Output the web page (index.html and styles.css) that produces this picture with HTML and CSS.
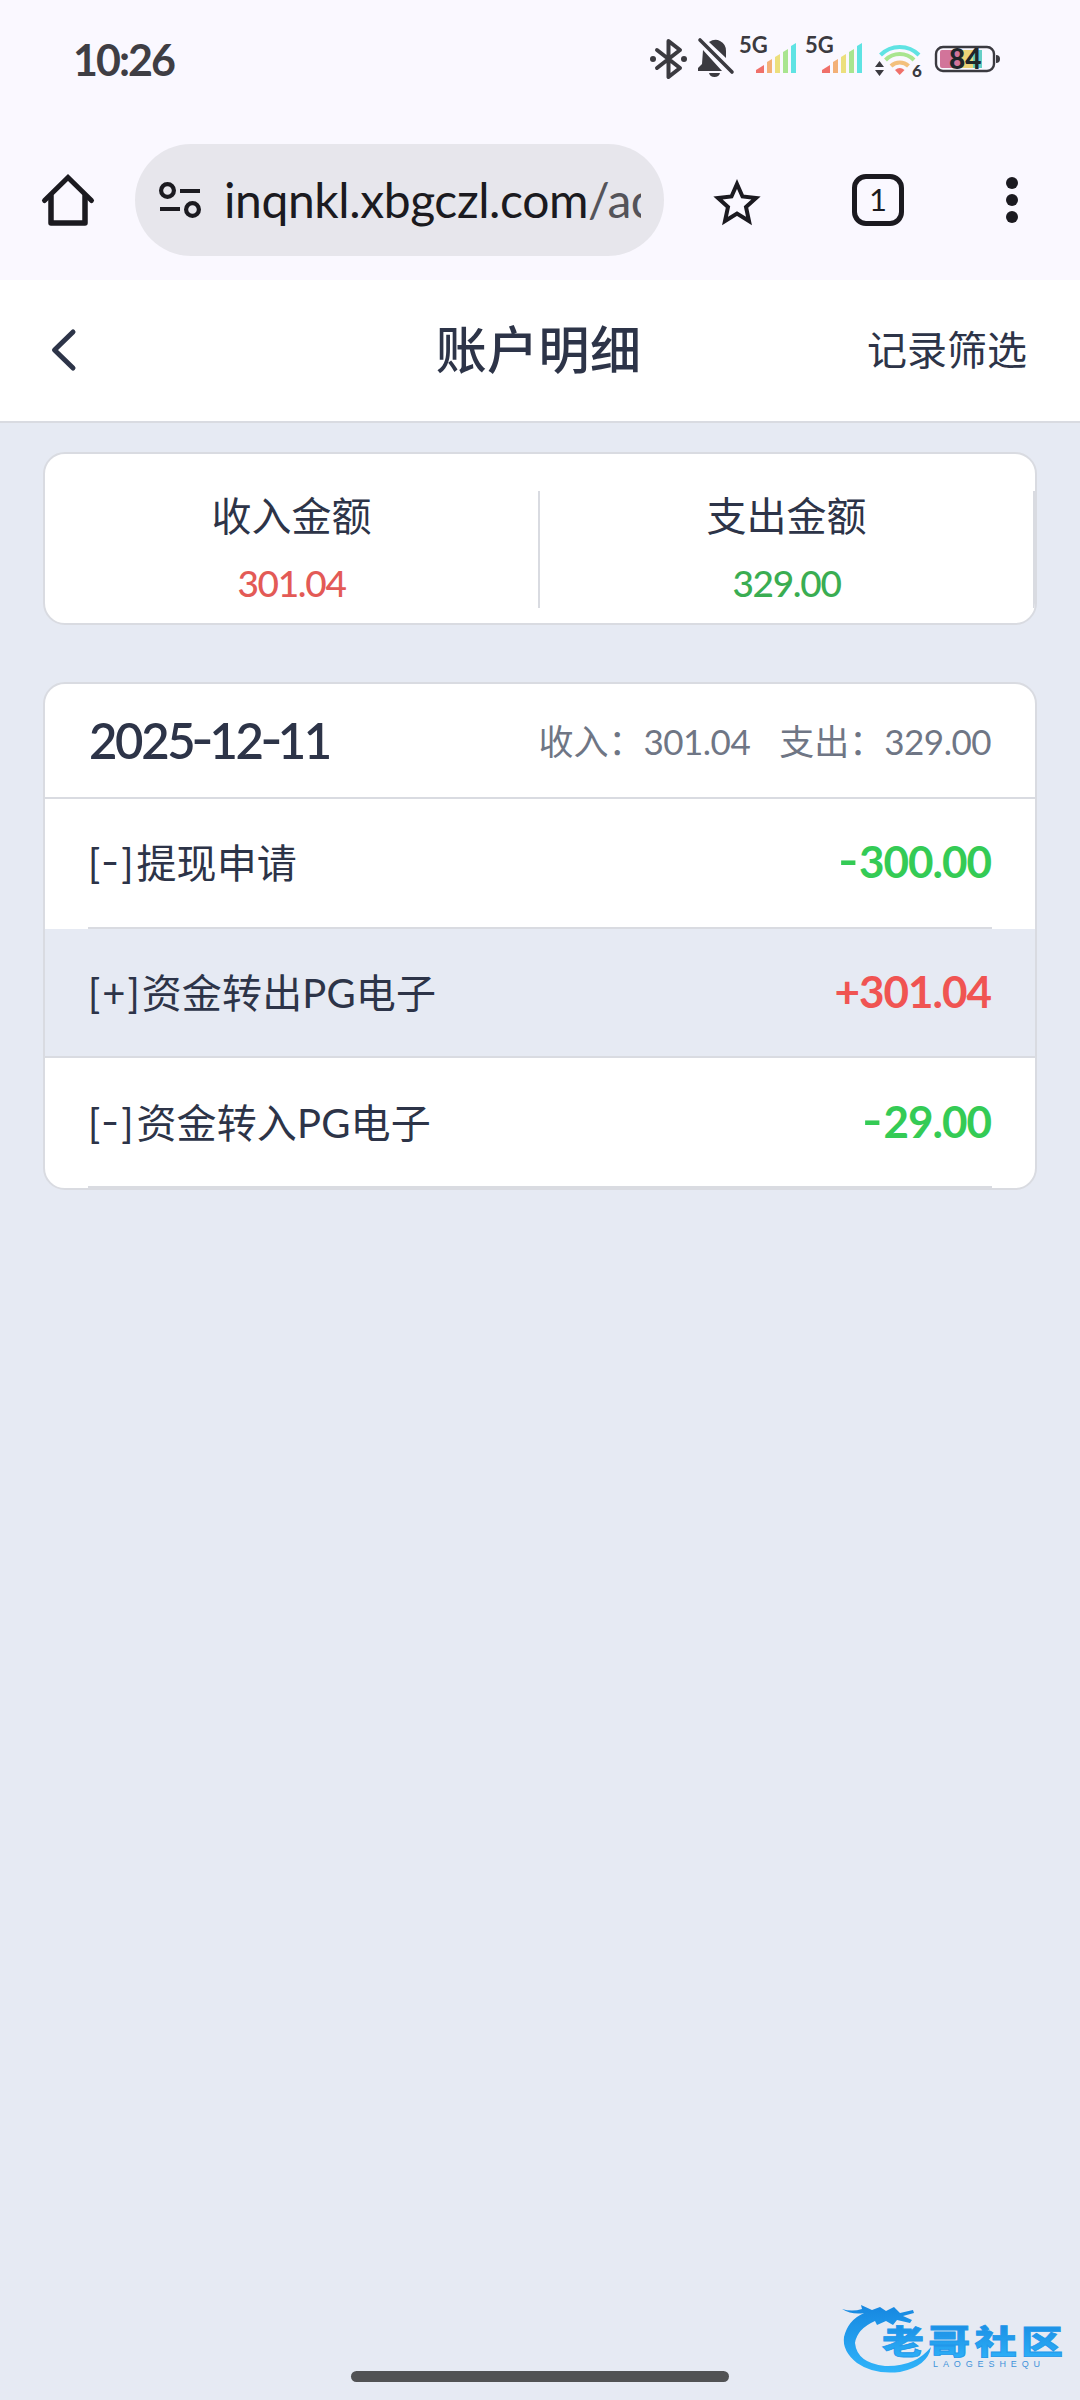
FILE: index.html
```html
<!DOCTYPE html>
<html lang="zh-CN">
<head>
<meta charset="utf-8">
<title>账户明细</title>
<link rel="stylesheet" href="styles.css">
</head>
<body>
<div class="status">
  <span class="clock">10:26</span>
  <svg class="status-icons" width="360" height="60" viewBox="645 30 360 60">
    <g fill="none" stroke="#3b3a40" stroke-width="4" stroke-linejoin="round" stroke-linecap="round">
      <path d="M657 50L680 68L668.5 77V41L680 50L657 68"/>
    </g>
    <circle cx="653" cy="59" r="3" fill="#3b3a40"/><circle cx="684" cy="59" r="3" fill="#3b3a40"/>
    <path fill="#3b3a40" d="M709 42Q715 38 720 41Q726 44 726 51V58ZM703 50L722 71H698V68L702 64ZM709 73H720Q719 77 714.500 77Q710 77 709 73Z"/>
    <path d="M700 40L732 72" stroke="#3b3a40" stroke-width="3.600" stroke-linecap="round"/>
    <text class="net" x="739" y="53">5G</text>
    <text class="net" x="805" y="53">5G</text>
    <g id="bars">
      <path fill="#f0706a" d="M756 73V70L764 65V73Z"/><path fill="#f3b077" d="M767 73V62L772 59V73Z"/><path fill="#ecdf7d" d="M775 73V57L780 54V73Z"/><path fill="#a9e58f" d="M783 73V52L788 49V73Z"/><path fill="#5fe3e3" d="M791 73V46L796 43V73Z"/>
    </g>
    <use href="#bars" x="66"/>
    <g fill="none" stroke-width="4">
      <path stroke="#5fe3e3" d="M880.500 55A27 27 0 0 1 919 55"/>
      <path stroke="#a9e58f" d="M885.500 60A20 20 0 0 1 914 60"/>
      <path stroke="#f3c07d" d="M891 66A12.500 12.500 0 0 1 908.500 66"/>
    </g>
    <path fill="#f0706a" d="M895 70Q899.700 66 904.500 70L899.700 75Z"/>
    <path fill="#3b3a40" d="M875 67L879.500 61L884 67ZM875 70L879.500 76L884 70Z"/>
    <text class="six" x="912" y="77">6</text>
    <rect x="940" y="50" width="38" height="18" rx="2" fill="#d2749a"/><path fill="#ecd377" d="M961 50H973V68H961Z"/><path fill="#65cfc6" d="M973 50H982V68H973Z"/>
    <rect x="936" y="47" width="58" height="24" rx="7" fill="none" stroke="#3b3a40" stroke-width="2.400"/>
    <path fill="#3b3a40" d="M996 55Q1000 55 1000 59Q1000 63 996 63Z"/>
    <text class="batt" x="949" y="68.500">84</text>
  </svg>
</div>
<div class="toolbar">
  <svg class="home" width="56" height="56" viewBox="40 172 56 56" fill="none" stroke="#1b1a20" stroke-width="5" stroke-linecap="round">
    <path d="M44.500 200.500L68 177.500L91.500 200.500"/><path stroke-width="5.500" d="M51 196V223H85V196" stroke-linejoin="round"/>
  </svg>
  <div class="omnibox">
    <svg width="44" height="38" viewBox="158 181 44 38" fill="none" stroke="#1b1a20" stroke-width="4.200">
      <circle cx="167.500" cy="190.500" r="6.400"/><path d="M180 191H200M160 209H180"/><circle cx="192.500" cy="209.500" r="6.400"/>
    </svg>
    <div class="url">inqnkl.xbgczl.com<span class="path">/ac</span></div>
  </div>
  <svg class="star" width="52" height="50" viewBox="711 177 52 50" fill="none" stroke="#1b1a20" stroke-width="4">
    <path d="M737 184L742.500 196.500L756 198L746 207L749 221L737 213.500L725 221L728 207L718 198L731.500 196.500Z"/>
  </svg>
  <div class="tabs">1</div>
  <div class="more"><i></i><i></i><i></i></div>
</div>
<header class="page-head">
  <svg class="back" width="28" height="44" viewBox="50 328 28 44" fill="none" stroke="#2d3448" stroke-width="5" stroke-linecap="round" stroke-linejoin="round"><path d="M73 332L54.500 350L73 368"/></svg>
  <h1>账户明细</h1>
  <span class="filter">记录筛选</span>
</header>
<main>
  <section class="card summary">
    <div class="sum"><span>收入金额</span><b class="in">301.04</b></div>
    <div class="sum"><span>支出金额</span><b class="out">329.00</b></div>
  </section>
  <section class="card ledger">
    <div class="day"><h2>2025<i class="dash">-</i>12<i class="dash">-</i>11</h2><div class="totals"><span>收入：<i>301.04</i></span><span>支出：<i>329.00</i></span></div></div>
    <ul>
      <li><div class="row"><span><i class="tag">[<i class="dash">-</i>]</i>提现申请</span><b class="minus"><i class="dash">-</i>300.00</b></div></li>
      <li class="alt"><div class="row"><span><i class="tag">[+]</i>资金转出PG电子</span><b class="plus">+301.04</b></div></li>
      <li><div class="row"><span><i class="tag">[<i class="dash">-</i>]</i>资金转入PG电子</span><b class="minus"><i class="dash">-</i>29.00</b></div></li>
    </ul>
  </section>
</main>
<div class="gesture"></div>
<svg class="logo" width="230" height="80" viewBox="840 2300 230 80">
  <defs><linearGradient id="g" x1="0" y1="0" x2="0" y2="1"><stop offset="0" stop-color="#1687e0"/><stop offset="1" stop-color="#30b4fa"/></linearGradient></defs>
  <path fill="url(#g)" d="M842 2309Q852 2312 862 2309L861 2305L872 2310L880 2307L886 2311L894 2307L900 2313L913 2310L914 2313L903 2316L912 2320L910 2323L897 2320L893 2325L886 2321L877 2325L875 2321Q857 2329 855 2343Q857 2363 885 2366Q915 2367 931 2347Q928 2366 900 2372Q874 2375 857 2363Q842 2351 844 2337Q848 2320 864 2313Q852 2315 842 2309Z"/>
  <g class="brand" fill="url(#g)" transform="translate(882 2354) scale(1.270 1)"><text x="0" y="0">老</text><text x="36.500" y="0">哥</text><text x="73" y="0">社</text><text x="109.500" y="0">区</text></g>
  <text class="latin" x="933" y="2367">LAOGESHEQU</text>
</svg>
</body>
</html>
```
FILE: styles.css
```css
* { box-sizing: border-box; margin: 0; padding: 0; }
body {
  width: 1080px; height: 2400px; position: relative; overflow: hidden;
  display: flex; flex-direction: column;
  background: #e6eaf3; color: #2d3448;
  font-family: Lato, "Noto Sans CJK SC", sans-serif;
}
i { font-style: normal; }
.status {
  height: 120px; flex: none; background: #faf8ff; padding: 30px 75px 0 73px;
  display: flex; justify-content: space-between; align-items: flex-start;
}
.clock { font-size: 43px; line-height: 60px; font-weight: 700; color: #3f3e44; letter-spacing: -2px; }
.status-icons { display: block; }
.net { font: 700 22px Lato, sans-serif; fill: #3b3a40; }
.six { font: 900 17px Lato, sans-serif; fill: #3b3a40; }
.batt { font: 900 28px Lato, sans-serif; fill: #20262a; }
.toolbar { height: 160px; flex: none; background: #faf8ff; display: flex; align-items: center; padding: 0 62px 0 40px; }
.omnibox {
  margin-left: 39px; width: 529px; height: 112px; border-radius: 56px; background: #e7e6ec;
  display: flex; align-items: center; padding: 0 23px;
}
.omnibox svg { flex: none; }
.url {
  margin-left: 22px; width: 417px; overflow: hidden; white-space: nowrap;
  font-size: 48px; line-height: 64px; color: #1b1a20; letter-spacing: -.4px;
}
.path { color: #55545a; }
.star { margin-left: 47px; margin-top: 4px; }
.tabs {
  margin-left: 89px; width: 52px; height: 52px; border: 5.500px solid #1b1a20; border-radius: 14px;
  color: #1b1a20; font-size: 31px; line-height: 41px; text-align: center;
}
.more { margin-left: auto; display: flex; flex-direction: column; gap: 5px; }
.more i { width: 12px; height: 12px; border-radius: 50%; background: #1b1a20; }
.page-head {
  height: 143px; flex: none; background: #fff; border-bottom: 2px solid #d9dbe1;
  display: grid; grid-template-columns: 1fr auto 1fr; align-items: center; padding: 0 53px 2px 50px;
}
.page-head h1 { font-size: 51px; line-height: 60px; font-weight: 500; letter-spacing: .4px; }
.filter { justify-self: end; font-size: 40px; line-height: 50px; }
main { padding: 29px 43px 0; display: flex; flex-direction: column; gap: 57px; }
.card { border: 2px solid #d9dbe1; border-radius: 22px; background: #fff; overflow: hidden; }
.summary { height: 173px; display: flex; padding: 37px 0 15px; }
.sum { flex: 1; border-right: 2px solid #d9dbe1; display: flex; flex-direction: column; align-items: center; }
.sum span { font-size: 40px; line-height: 50px; }
.sum b { font-size: 37px; line-height: 44px; margin-top: 20px; font-weight: 500; letter-spacing: -1.300px; }
.in { color: #e35a56; }
.out { color: #3aad52; }
.day {
  height: 115px; border-bottom: 2px solid #d9dbe1; padding: 0 44px 2px;
  display: flex; justify-content: space-between; align-items: center;
}
.dash { display: inline-block; transform: translateY(-2px) scaleX(1.250); }
.day h2 { font-size: 49px; font-weight: 600; letter-spacing: -2.300px; }
.totals { display: flex; gap: 29px; font-size: 35px; color: #6f7685; }
.totals i { letter-spacing: -.5px; }
.ledger ul { list-style: none; height: 389px; display: grid; grid-template-rows: repeat(3, 1fr); }
.ledger li { padding: 0 43px; }
.ledger li.alt { background: #e6eaf3; padding: 0; }
.alt .row { padding: 0 43px 3px; }
.row { height: 100%; border-bottom: 2px solid #d9dbe1; padding-bottom: 3px; display: flex; justify-content: space-between; align-items: center; }
.row span { font-size: 40px; letter-spacing: .15px; }
.tag { letter-spacing: 3px; }
.alt .tag { letter-spacing: 2px; }
.row b { font-size: 44px; font-weight: 700; letter-spacing: -1px; margin-right: 1px; }
.minus { color: #34cb55; }
.minus .dash { margin-right: 4px; }
.plus { color: #f05452; }
.gesture { margin: auto auto 18px; width: 378px; height: 11px; border-radius: 6px; background: #515254; }
.logo { position: absolute; left: 840px; top: 2300px; }
.brand { font: 900 33px "Noto Sans CJK SC", sans-serif; stroke: #2297ea; stroke-width: .8px; }
.latin { font: 400 9px "Liberation Sans", sans-serif; fill: #3f93da; letter-spacing: 4.900px; }
```
